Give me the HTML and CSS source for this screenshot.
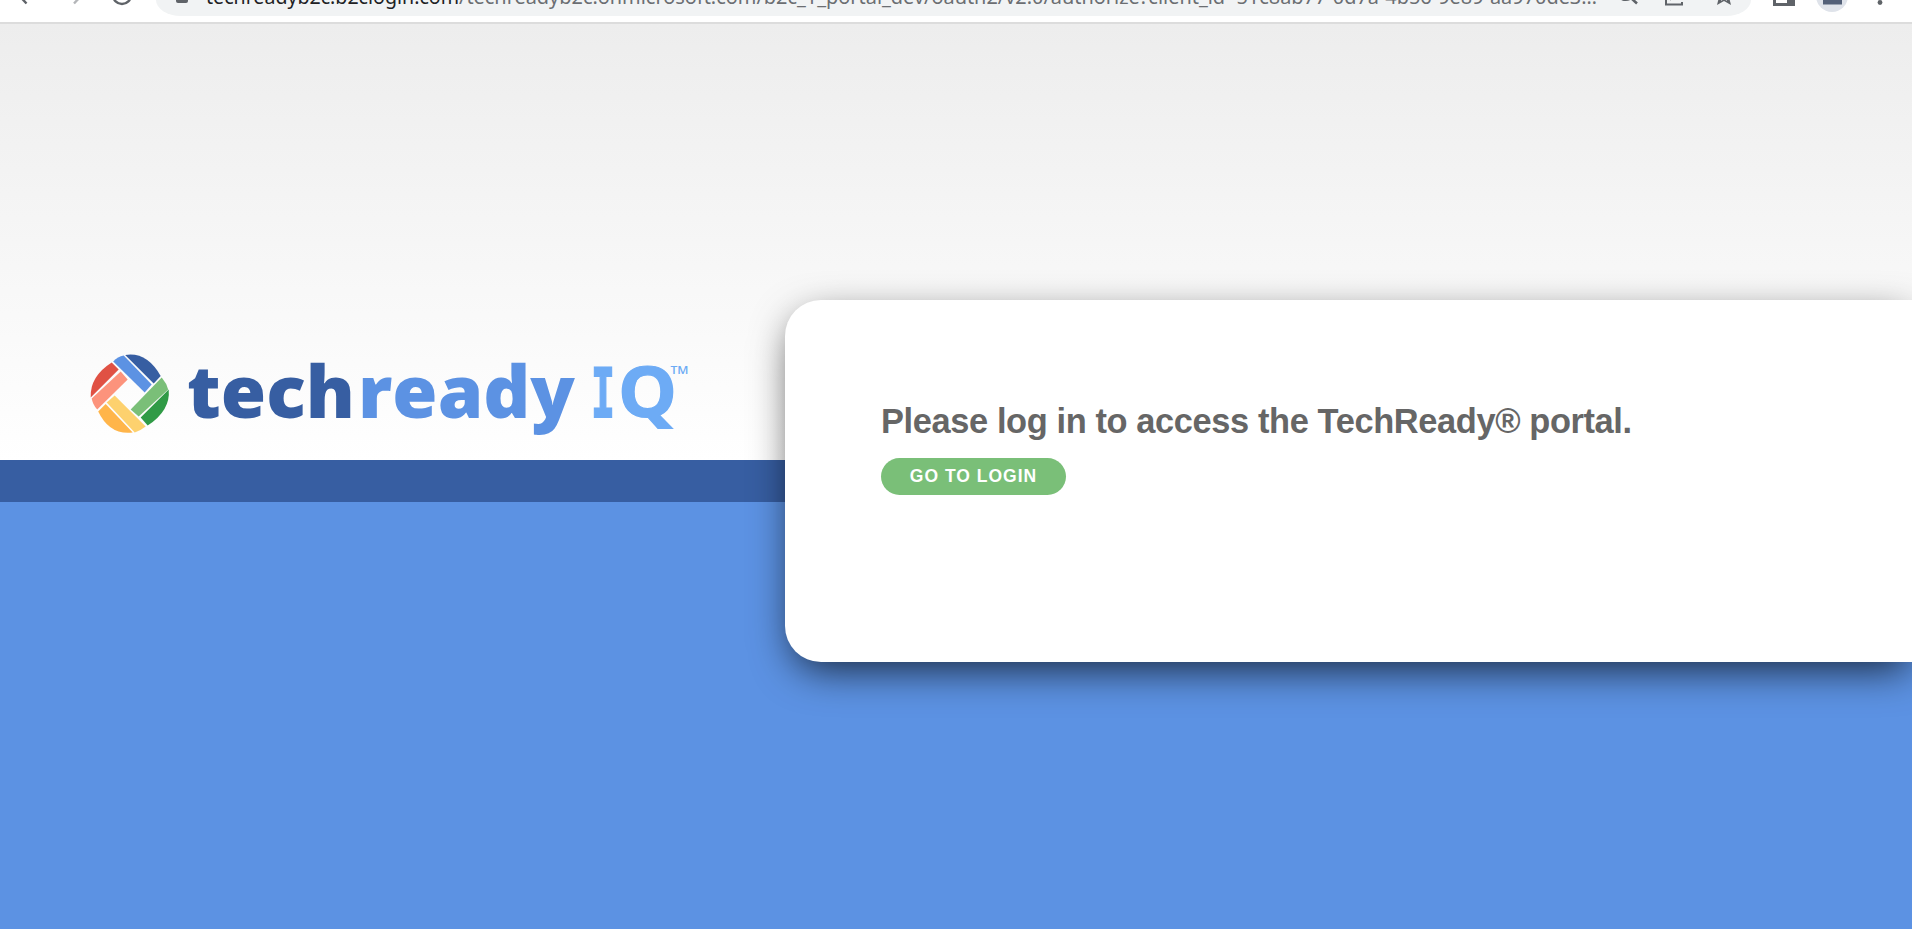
FILE: index.html
```html
<!DOCTYPE html>
<html lang="en">
<head>
<meta charset="utf-8">
<title>TechReady Portal</title>
<link rel="stylesheet" href="styles.css">
</head>
<body>
<header class="toolbar">
<svg class="nav-icons" width="156" height="22" viewBox="0 0 156 22" fill="none" stroke="#5f6368" stroke-width="2.4"><path d="M20-3.500 26.500 3.500"/><path stroke="#b4b6b9" d="M74 3.500 81-4"/><path d="M113-5A9 9 0 0 0 131-5"/></svg>
<div class="address">
<svg width="1595" height="16" viewBox="156 0 1595 16">
<path fill="#5f6368" d="M176 0h12v1q0 2-2 2h-8q-2 0-2-2z"/>
<text class="url host" x="206" y="3.500" textLength="253" lengthAdjust="spacingAndGlyphs">techreadyb2c.b2clogin.com</text>
<text class="url" x="459" y="3.500" textLength="1138" lengthAdjust="spacingAndGlyphs">/techreadyb2c.onmicrosoft.com/b2c_1_portal_dev/oauth2/v2.0/authorize?client_id=51c8ab77-0d7a-4b56-9e89-aa970de3…</text>
<g fill="none" stroke="#5f6368" stroke-width="2.600"><path d="M1622-1q5 2 9-1l6 5.500"/><path stroke-width="2" d="M1666 0v4.600h16V2"/><path stroke-width="2" d="M1670 0l1-2"/></g>
<path fill="#5f6368" d="M1719-3l-2 8 7-4 7 4-2-8h-3l1 4-3-2-3 2 1-4z"/>
</svg>
</div>
<svg class="tools" width="161" height="22" viewBox="1751 0 161 22"><path fill="#5f6368" d="M1773 0h22v6h-22z"/><path fill="#fff" d="M1776 0h11v3h-11z"/><circle cx="1832" cy="-4" r="16" fill="#dfe3ea"/><path fill="#536078" d="M1823 0h19v4.500h-19z"/><circle cx="1880" cy="2.500" r="2.400" fill="#5f6368"/></svg>
</header>
<main class="page">
<section class="brand">
<svg class="logo" width="620" height="110" viewBox="80 340 620 110" role="img" aria-label="techready IQ">
<g transform="translate(-.3 .5)">
<path fill="#375ea2" d="M125.500 354.500Q147 351 161 375.500L154 383z"/>
<path fill="#5c92e3" d="M113.500 361Q118 356 124 355L152 384 145 392z"/>
<path fill="#7abf78" d="M131 409 162 377Q167 383 168.500 389L139 416z"/>
<path fill="#309b46" d="M141 417 169 389Q171 410 148 425z"/>
<path fill="#fdd16e" d="M107 402 115 395 146 426Q141 430 135 432z"/>
<path fill="#ffb54a" d="M98.500 411 106 403.500 133 432Q110 435 98.500 411z"/>
<path fill="#fc937c" d="M92 398 121 371 128 379 97.500 409Q93 404 92 398z"/>
<path fill="#e05144" d="M91 397Q90 376 112 362L119 369z"/>
</g>
<g class="wordmark">
<text x="187" y="417.500" fill="#375ea2" textLength="168" lengthAdjust="spacingAndGlyphs">tech</text>
<text x="358" y="417.500" fill="#5c92e3" textLength="217" lengthAdjust="spacingAndGlyphs">ready</text>
<text class="mark-i" x="591" y="416.500" fill="#6dabf5" stroke="#6dabf5" stroke-width="1.800" textLength="24" lengthAdjust="spacingAndGlyphs">I</text>
<text class="mark-q" x="618" y="417" fill="#6dabf5" stroke="#6dabf5" stroke-width="1.200" textLength="59" lengthAdjust="spacingAndGlyphs">Q</text>
<text class="tm" x="670.500" y="374" fill="#6dabf5" textLength="18" lengthAdjust="spacingAndGlyphs">TM</text>
</g>
</svg>
</section>
<div class="stripe"></div>
<section class="card">
<h1>Please log in to access the TechReady® portal.</h1>
<a class="login" href="#">GO TO LOGIN</a>
</section>
</main>
</body>
</html>
```
FILE: styles.css
```css
* { box-sizing: border-box; }
body { margin: 0; height: 929px; overflow: hidden; font-family: "Liberation Sans", Arial, sans-serif; }
svg { display: block; }
.toolbar { display: flex; height: 24px; background: #fff; border-bottom: 2px solid #dcdcdc; }
.address { width: 1595px; height: 16px; background: #f1f3f4; border-radius: 0 0 28px 28px / 0 0 18px 18px; overflow: hidden; }
.url { font: 20px "Noto Sans", sans-serif; fill: #6b6e72; }
.url.host { fill: #202124; }
.page { position: relative; height: 905px; background: #5c92e3; overflow: hidden; }
.brand { height: 436px; padding: 316px 0 0 80px; background: linear-gradient(#ededed, #fff); }
.stripe { height: 42px; background: #375ea2; }
.wordmark { font: 800 73px "Open Sans", sans-serif; }
.mark-i { font: 700 68px "DejaVu Sans Mono", monospace; }
.mark-q { font: 700 70px "Open Sans", sans-serif; }
.tm { font: 600 11.5px "Open Sans", sans-serif; }
.card { position: absolute; left: 785px; top: 276px; width: 1127px; height: 362px; padding: 100px 96px; background: #fff; border-radius: 36px 0 0 36px; box-shadow: 2px 13px 40px -6px rgba(0,0,0,.74); }
h1 { margin: 0; font-size: 34.4px; letter-spacing: -.38px; line-height: 43px; color: #666; white-space: nowrap; }
.login { display: block; width: 185px; height: 37px; margin-top: 15px; border-radius: 19px; background: #7abf78; color: #fff; font-size: 17.5px; font-weight: 700; line-height: 36px; letter-spacing: 1px; text-align: center; text-decoration: none; }
```
